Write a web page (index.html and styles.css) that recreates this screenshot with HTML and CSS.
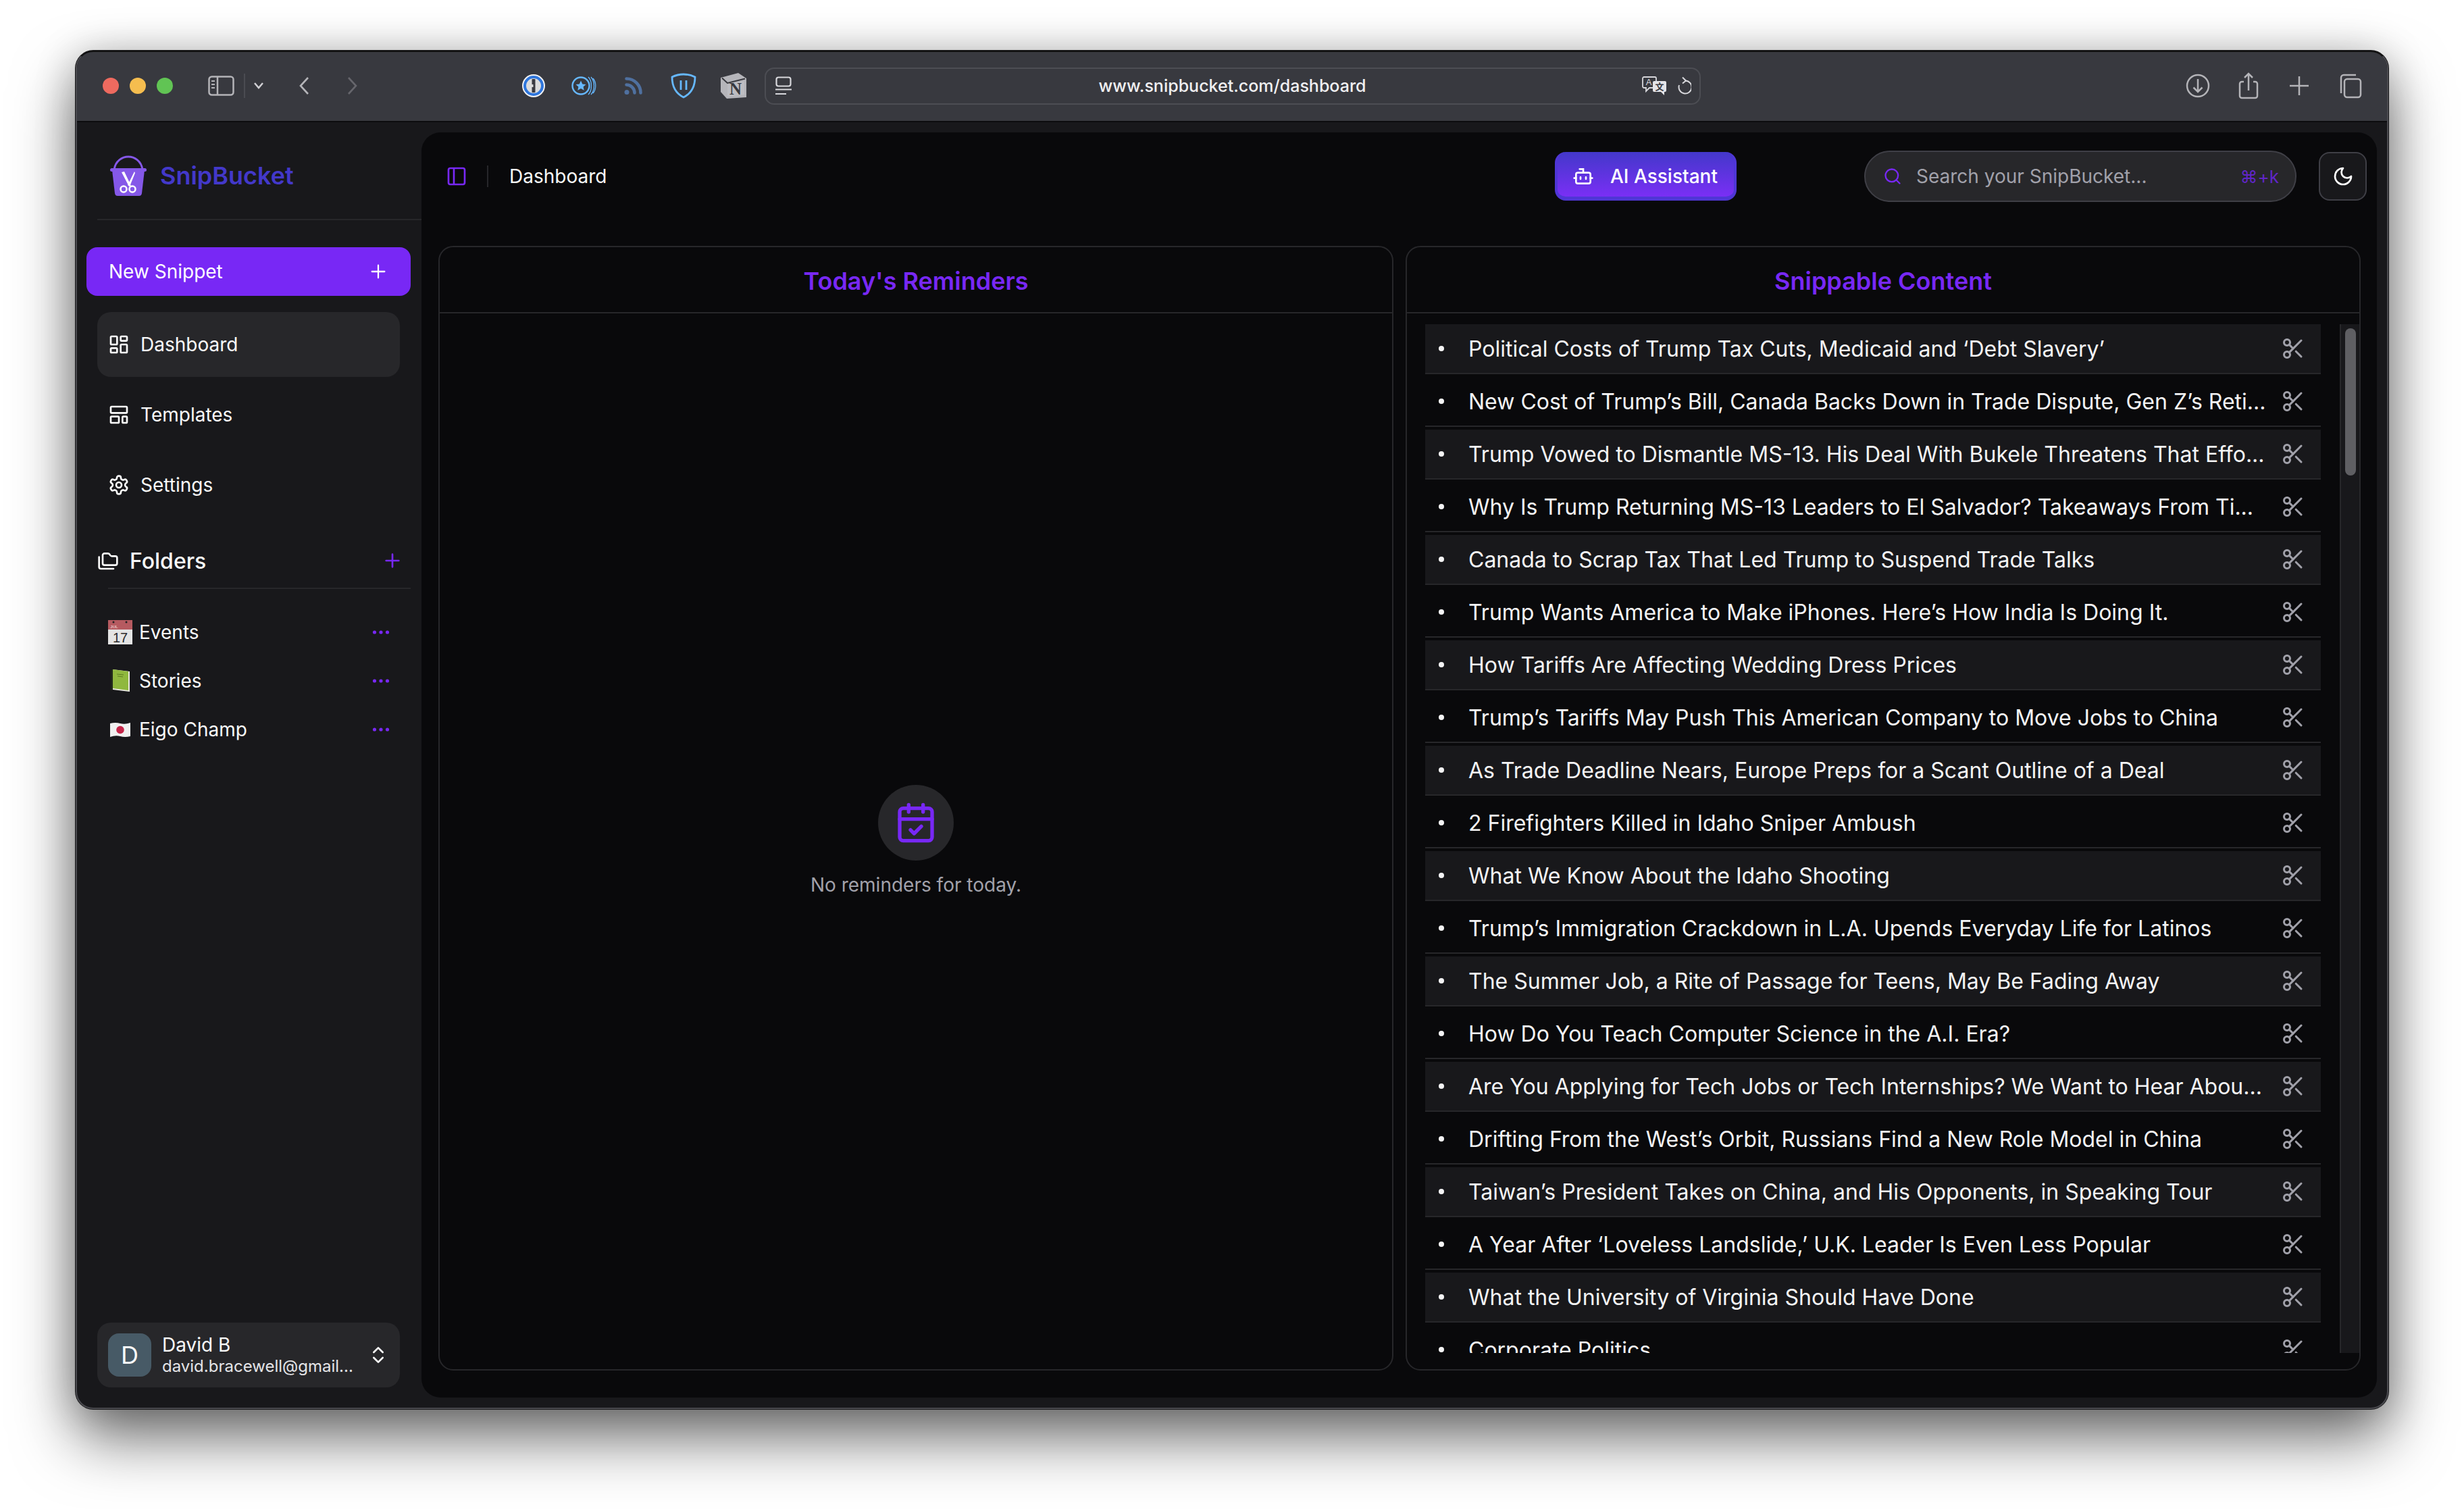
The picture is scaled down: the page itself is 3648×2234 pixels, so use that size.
FILE: index.html
```html
<!DOCTYPE html>
<html>
<head>
    <title>SnipBucket - Dashboard</title>
    <link rel="stylesheet" href="styles.css">
</head>
<body>
    <div class="window">
        <!-- browser chrome -->
        <div class="titlebar">
            <span class="light red"></span>
            <span class="light yellow"></span>
            <span class="light green"></span>

            <svg class="tb-sidebar" width="39" height="30" viewBox="0 0 39 30" fill="none" stroke="#b4b4b8" stroke-width="2.5">
                <rect x="1.5" y="1.5" width="36" height="27" rx="4"/>
                <path d="M14 1.5v27"/>
                <path d="M5 8h5M5 13h5M5 18h5" stroke-width="2"/>
            </svg>
            <span class="tb-divider"></span>
            <svg class="tb-caret" width="16" height="12" viewBox="0 0 16 12" fill="none" stroke="#d0d0d4" stroke-width="2.5"><path d="M2 2l6 7 6-7"/></svg>
            <svg class="tb-back" width="16" height="28" viewBox="0 0 16 28" fill="none" stroke="#b4b4b8" stroke-width="2.6"><path d="M14 2L3 14l11 12"/></svg>
            <svg class="tb-forward" width="16" height="28" viewBox="0 0 16 28" fill="none" stroke="#66666c" stroke-width="2.6"><path d="M2 2l11 12L2 26"/></svg>

            <div class="extensions">
                <svg width="40" height="40" viewBox="0 0 40 40">
                    <circle cx="20" cy="20" r="17" fill="#f2f2f2"/>
                    <circle cx="20" cy="20" r="13" fill="#dcdcdc" stroke="#2f76dc" stroke-width="4"/>
                    <rect x="17.500" y="10" width="5" height="20" rx="1" fill="#3a3a40"/>
                    <rect x="16.500" y="18" width="3" height="4" fill="#dcdcdc"/>
                </svg>
                <svg width="40" height="40" viewBox="0 0 40 40" fill="none" stroke="#66b8ff" stroke-width="2.4">
                    <circle cx="16" cy="20" r="12.500"/>
                    <path d="M16 12.500l2.300 4.900 5.200.6-3.900 3.600 1.100 5.200-4.700-2.700-4.700 2.700 1.100-5.200-3.900-3.600 5.200-.6z" fill="#66b8ff" stroke="none"/>
                    <path d="M27 7c6 6 6 20 0 26M31 7c6 7 6 19 0 26M34 9c5 6 5 16 0 22" stroke-width="1.300"/>
                </svg>
                <svg width="40" height="40" viewBox="0 0 40 40" fill="none" stroke="#4f709f" stroke-width="4.600" stroke-linecap="round">
                    <path d="M9.500 18.500a12 12 0 0 1 12 12"/>
                    <path d="M9.500 9.500a21 21 0 0 1 21 21"/>
                    <circle cx="10" cy="29.500" r="3.500" fill="#4f709f" stroke="none"/>
                </svg>
                <svg width="40" height="40" viewBox="0 0 40 40" fill="none" stroke="#66b8ff" stroke-width="2.8">
                    <path d="M20 3c6 0 12 1.500 17 4 0 13-5 24-17 30C8 31 3 20 3 7c5-2.500 11-4 17-4z"/>
                    <path d="M16 12v14M24 12v14"/>
                </svg>
                <svg width="40" height="40" viewBox="0 0 40 40">
                    <path d="M1 8L27 1l12 8v28L10 39 1 29z" fill="#b5b5ba"/>
                    <path d="M3 8.500l8 7.500 26-6.500" fill="none" stroke="#38393f" stroke-width="2"/>
                    <path d="M11 18l25-5v20l-25 3z" fill="#bdbdc2"/>
                    <text class="notion-n" x="23" y="33" text-anchor="middle">N</text>
                </svg>
            </div>

            <div class="address">
                <svg width="24" height="28" viewBox="0 0 24 28" fill="none" stroke="#d8d8dc" stroke-width="2.200">
                    <rect x="1.500" y="1.500" width="21" height="13" rx="3"/>
                    <path d="M0 19.500h24M0 26h16"/>
                </svg>
                <span class="url">www.snipbucket.com/dashboard</span>
                <svg class="translate" width="37" height="28" viewBox="0 0 37 28">
                    <path d="M3 1h16a2 2 0 0 1 2 2v12a2 2 0 0 1-2 2H11l-5 5v-5H3a2 2 0 0 1-2-2V3a2 2 0 0 1 2-2z" fill="#38393f" stroke="#d8d8dc" stroke-width="1.800"/>
                    <text class="tr-a" x="10" y="13" text-anchor="middle">A</text>
                    <path d="M18 7h16a2 2 0 0 1 2 2v12a2 2 0 0 1-2 2h-1v5l-5-5H18a2 2 0 0 1-2-2V9a2 2 0 0 1 2-2z" fill="#e4e4e8"/>
                    <text class="tr-b" x="26" y="20" text-anchor="middle">文</text>
                </svg>
                <svg class="reload" width="22" height="28" viewBox="0 0 22 28" fill="none" stroke="#d8d8dc" stroke-width="2">
                    <path d="M13 6.500A9.500 9.500 0 1 1 4 13"/>
                    <path d="M9 1.500l5 5-5 4"/>
                </svg>
            </div>

            <div class="tb-actions">
                <svg width="40" height="40" viewBox="0 0 40 40" fill="none" stroke="#b4b4b8" stroke-width="2.500">
                    <circle cx="20" cy="20" r="16"/>
                    <path d="M20 10v19M13.500 22.500l6.500 6.500 6.500-6.500"/>
                </svg>
                <svg width="40" height="40" viewBox="0 0 40 40" fill="none" stroke="#b4b4b8" stroke-width="2.500">
                    <path d="M13 14h-3a3 3 0 0 0-3 3v18a3 3 0 0 0 3 3h20a3 3 0 0 0 3-3V17a3 3 0 0 0-3-3h-3"/>
                    <path d="M20 27V2M14 8l6-6 6 6"/>
                </svg>
                <svg width="40" height="40" viewBox="0 0 40 40" fill="none" stroke="#b4b4b8" stroke-width="2.500">
                    <path d="M20 6v28M6 20h28"/>
                </svg>
                <svg width="40" height="40" viewBox="0 0 40 40" fill="none" stroke="#b4b4b8" stroke-width="2.500">
                    <path d="M7 31V8a4 4 0 0 1 4-4h18"/>
                    <rect x="12" y="10" width="24" height="27" rx="4"/>
                </svg>
            </div>
        </div>

        <div class="app">
            <aside class="sidebar">
                <div class="brand">
                    <svg width="54" height="60" viewBox="0 0 54 60">
                        <path d="M6 21C8 8 18 2 27 2s19 6 21 19" fill="none" stroke="#8558e8" stroke-width="3"/>
                        <rect x="0" y="19" width="54" height="5" rx="2.500" fill="#8558e8"/>
                        <path d="M3 22h48l-4 34q-.5 4-4 4H11q-3.500 0-4-4z" fill="#8558e8"/>
                        <path d="M17 25l4-1 10 21-3 1zM36 24l1 2-8 20-3-2z" fill="#fff"/>
                        <circle cx="20" cy="50" r="4.500" fill="none" stroke="#fff" stroke-width="2.600"/>
                        <circle cx="33" cy="50" r="4.500" fill="none" stroke="#fff" stroke-width="2.600"/>
                    </svg>
                    <span class="brand-name">SnipBucket</span>
                </div>

                <button class="new-snippet">
                    <span>New Snippet</span>
                    <svg width="32" height="32" viewBox="0 0 24 24" fill="none" stroke="#fff" stroke-width="1.700" stroke-linecap="round"><path d="M5 12h14M12 5v14"/></svg>
                </button>

                <nav class="nav">
                    <a class="nav-item active">
                        <svg class="icon" viewBox="0 0 24 24"><rect x="3" y="3" width="7" height="9" rx="1"/><rect x="14" y="3" width="7" height="5" rx="1"/><rect x="14" y="12" width="7" height="9" rx="1"/><rect x="3" y="16" width="7" height="5" rx="1"/></svg>
                        Dashboard
                    </a>
                    <a class="nav-item">
                        <svg class="icon" viewBox="0 0 24 24"><rect x="3" y="3" width="18" height="7" rx="1"/><rect x="3" y="14" width="9" height="7" rx="1"/><rect x="16" y="14" width="5" height="7" rx="1"/></svg>
                        Templates
                    </a>
                    <a class="nav-item">
                        <svg class="icon" viewBox="0 0 24 24"><path d="M12.220 2h-.44a2 2 0 0 0-2 2v.18a2 2 0 0 1-1 1.730l-.43.25a2 2 0 0 1-2 0l-.15-.08a2 2 0 0 0-2.730.73l-.22.38a2 2 0 0 0 .73 2.730l.15.1a2 2 0 0 1 1 1.720v.51a2 2 0 0 1-1 1.740l-.15.09a2 2 0 0 0-.73 2.730l.22.38a2 2 0 0 0 2.730.73l.15-.08a2 2 0 0 1 2 0l.43.25a2 2 0 0 1 1 1.730V20a2 2 0 0 0 2 2h.44a2 2 0 0 0 2-2v-.18a2 2 0 0 1 1-1.730l.43-.25a2 2 0 0 1 2 0l.15.08a2 2 0 0 0 2.730-.73l.22-.39a2 2 0 0 0-.73-2.730l-.15-.08a2 2 0 0 1-1-1.740v-.5a2 2 0 0 1 1-1.740l.15-.09a2 2 0 0 0 .73-2.730l-.22-.38a2 2 0 0 0-2.730-.73l-.15.08a2 2 0 0 1-2 0l-.43-.25a2 2 0 0 1-1-1.730V4a2 2 0 0 0-2-2z"/><circle cx="12" cy="12" r="3"/></svg>
                        Settings
                    </a>
                </nav>

                <div class="folders-head">
                    <svg class="icon" viewBox="0 0 24 24"><path d="M20 17a2 2 0 0 0 2-2V9a2 2 0 0 0-2-2h-3.900a2 2 0 0 1-1.690-.9l-.81-1.200a2 2 0 0 0-1.670-.9H8a2 2 0 0 0-2 2v9a2 2 0 0 0 2 2Z"/><path d="M2 8v11a2 2 0 0 0 2 2h14"/></svg>
                    <span class="folders-title">Folders</span>
                    <svg class="folders-add" width="32" height="32" viewBox="0 0 24 24" fill="none" stroke="#7828f5" stroke-width="2" stroke-linecap="round"><path d="M5 12h14M12 5v14"/></svg>
                </div>
                <div class="folders-rule"></div>

                <div class="folders">
                    <div class="folder">
                        <svg class="emoji" viewBox="0 0 36 36">
                            <rect x="0" y="0" width="36" height="36" fill="#e4e4e4"/>
                            <rect x="0" y="0" width="36" height="14" fill="#b65a60"/>
                            <circle cx="8" cy="3" r="1.500" fill="#222"/><circle cx="27" cy="3" r="1.500" fill="#222"/>
                            <text class="emoji-month" x="9" y="12" text-anchor="middle">JUL</text>
                            <text class="emoji-day" x="18" y="33" text-anchor="middle">17</text>
                        </svg>
                        <span class="folder-name">Events</span>
                        <svg class="dots" width="28" height="6" viewBox="0 0 28 6" fill="#7828f5"><circle cx="4.500" cy="3" r="2.600"/><circle cx="14" cy="3" r="2.600"/><circle cx="23.500" cy="3" r="2.600"/></svg>
                    </div>
                    <div class="folder">
                        <svg class="emoji" viewBox="0 0 36 36">
                            <path d="M4 2l3-1v30l-3 1z" fill="#20281a"/>
                            <path d="M7 1l25 3v30L7 31z" fill="#e8e8e0"/>
                            <path d="M7 1l23 3v28L7 29z" fill="#8fb83e"/>
                            <path d="M13 8l10 1M14 11l8 1" stroke="#5d7c22" stroke-width="1"/>
                        </svg>
                        <span class="folder-name">Stories</span>
                        <svg class="dots" width="28" height="6" viewBox="0 0 28 6" fill="#7828f5"><circle cx="4.500" cy="3" r="2.600"/><circle cx="14" cy="3" r="2.600"/><circle cx="23.500" cy="3" r="2.600"/></svg>
                    </div>
                    <div class="folder">
                        <svg class="emoji" viewBox="0 0 36 36">
                            <path d="M3 9q8-2 15 0t15-1v20q-8 2-15 0t-15 1z" fill="#f0f0f0"/>
                            <circle cx="18" cy="18.500" r="5.800" fill="#c5264a"/>
                        </svg>
                        <span class="folder-name">Eigo Champ</span>
                        <svg class="dots" width="28" height="6" viewBox="0 0 28 6" fill="#7828f5"><circle cx="4.500" cy="3" r="2.600"/><circle cx="14" cy="3" r="2.600"/><circle cx="23.500" cy="3" r="2.600"/></svg>
                    </div>
                </div>

                <div class="user">
                    <span class="avatar">D</span>
                    <div class="user-text">
                        <span class="user-name">David B</span>
                        <span class="user-mail">david.bracewell@gmail...</span>
                    </div>
                    <svg class="icon user-caret" viewBox="0 0 24 24"><path d="m7 15 5 5 5-5"/><path d="m7 9 5-5 5 5"/></svg>
                </div>
            </aside>

            <main class="panel">
                <header class="topbar">
                    <svg class="toggle" width="32" height="32" viewBox="0 0 24 24" fill="none" stroke="#7828f5" stroke-width="2"><rect x="3" y="3" width="18" height="18" rx="2"/><path d="M9 3v18"/></svg>
                    <span class="topbar-divider"></span>
                    <span class="crumb">Dashboard</span>

                    <button class="ai-button">
                        <svg width="32" height="32" viewBox="0 0 24 24" fill="none" stroke="#fff" stroke-width="2" stroke-linecap="round"><path d="M12 8V4H8"/><rect x="4" y="8" width="16" height="12" rx="2"/><path d="M2 14h2M20 14h2M15 13v2M9 13v2"/></svg>
                        AI Assistant
                    </button>

                    <div class="search">
                        <svg width="28" height="28" viewBox="0 0 24 24" fill="none" stroke="#7828f5" stroke-width="2" stroke-linecap="round"><circle cx="11" cy="11" r="8"/><path d="m21 21-4.300-4.300"/></svg>
                        <span class="search-text">Search your SnipBucket...</span>
                        <span class="kbd">⌘+k</span>
                    </div>

                    <button class="theme">
                        <svg width="32" height="32" viewBox="0 0 24 24" fill="none" stroke="#fff" stroke-width="2" stroke-linecap="round" stroke-linejoin="round"><path d="M12 3a6 6 0 0 0 9 9 9 9 0 1 1-9-9Z"/></svg>
                    </button>
                </header>

                <div class="cards">
                    <section class="card">
                        <h2 class="card-title">Today's Reminders</h2>
                        <div class="empty">
                            <span class="empty-badge">
                                <svg width="64" height="64" viewBox="0 0 24 24" fill="none" stroke="#7828f5" stroke-width="2" stroke-linecap="round" stroke-linejoin="round"><path d="M8 2v4M16 2v4"/><rect x="3" y="4" width="18" height="18" rx="2"/><path d="M3 10h18"/><path d="m9 16 2 2 4-4"/></svg>
                            </span>
                            <p class="empty-text">No reminders for today.</p>
                        </div>
                    </section>

                    <section class="card">
                        <h2 class="card-title">Snippable Content</h2>
                        <div class="content">
                            <ul class="rows">
                                <li class="row"><span class="bullet"></span><span class="row-text">Political Costs of Trump Tax Cuts, Medicaid and ‘Debt Slavery’</span><svg class="scissors" viewBox="0 0 24 24"><circle cx="6" cy="6" r="3"/><path d="M8.120 8.120 12 12"/><path d="M20 4 8.120 15.880"/><circle cx="6" cy="18" r="3"/><path d="M14.800 14.800 20 20"/></svg></li>
                                <li class="row"><span class="bullet"></span><span class="row-text">New Cost of Trump’s Bill, Canada Backs Down in Trade Dispute, Gen Z’s Reti...</span><svg class="scissors" viewBox="0 0 24 24"><circle cx="6" cy="6" r="3"/><path d="M8.120 8.120 12 12"/><path d="M20 4 8.120 15.880"/><circle cx="6" cy="18" r="3"/><path d="M14.800 14.800 20 20"/></svg></li>
                                <li class="row"><span class="bullet"></span><span class="row-text">Trump Vowed to Dismantle MS-13. His Deal With Bukele Threatens That Effo...</span><svg class="scissors" viewBox="0 0 24 24"><circle cx="6" cy="6" r="3"/><path d="M8.120 8.120 12 12"/><path d="M20 4 8.120 15.880"/><circle cx="6" cy="18" r="3"/><path d="M14.800 14.800 20 20"/></svg></li>
                                <li class="row"><span class="bullet"></span><span class="row-text">Why Is Trump Returning MS-13 Leaders to El Salvador? Takeaways From Ti...</span><svg class="scissors" viewBox="0 0 24 24"><circle cx="6" cy="6" r="3"/><path d="M8.120 8.120 12 12"/><path d="M20 4 8.120 15.880"/><circle cx="6" cy="18" r="3"/><path d="M14.800 14.800 20 20"/></svg></li>
                                <li class="row"><span class="bullet"></span><span class="row-text">Canada to Scrap Tax That Led Trump to Suspend Trade Talks</span><svg class="scissors" viewBox="0 0 24 24"><circle cx="6" cy="6" r="3"/><path d="M8.120 8.120 12 12"/><path d="M20 4 8.120 15.880"/><circle cx="6" cy="18" r="3"/><path d="M14.800 14.800 20 20"/></svg></li>
                                <li class="row"><span class="bullet"></span><span class="row-text">Trump Wants America to Make iPhones. Here’s How India Is Doing It.</span><svg class="scissors" viewBox="0 0 24 24"><circle cx="6" cy="6" r="3"/><path d="M8.120 8.120 12 12"/><path d="M20 4 8.120 15.880"/><circle cx="6" cy="18" r="3"/><path d="M14.800 14.800 20 20"/></svg></li>
                                <li class="row"><span class="bullet"></span><span class="row-text">How Tariffs Are Affecting Wedding Dress Prices</span><svg class="scissors" viewBox="0 0 24 24"><circle cx="6" cy="6" r="3"/><path d="M8.120 8.120 12 12"/><path d="M20 4 8.120 15.880"/><circle cx="6" cy="18" r="3"/><path d="M14.800 14.800 20 20"/></svg></li>
                                <li class="row"><span class="bullet"></span><span class="row-text">Trump’s Tariffs May Push This American Company to Move Jobs to China</span><svg class="scissors" viewBox="0 0 24 24"><circle cx="6" cy="6" r="3"/><path d="M8.120 8.120 12 12"/><path d="M20 4 8.120 15.880"/><circle cx="6" cy="18" r="3"/><path d="M14.800 14.800 20 20"/></svg></li>
                                <li class="row"><span class="bullet"></span><span class="row-text">As Trade Deadline Nears, Europe Preps for a Scant Outline of a Deal</span><svg class="scissors" viewBox="0 0 24 24"><circle cx="6" cy="6" r="3"/><path d="M8.120 8.120 12 12"/><path d="M20 4 8.120 15.880"/><circle cx="6" cy="18" r="3"/><path d="M14.800 14.800 20 20"/></svg></li>
                                <li class="row"><span class="bullet"></span><span class="row-text">2 Firefighters Killed in Idaho Sniper Ambush</span><svg class="scissors" viewBox="0 0 24 24"><circle cx="6" cy="6" r="3"/><path d="M8.120 8.120 12 12"/><path d="M20 4 8.120 15.880"/><circle cx="6" cy="18" r="3"/><path d="M14.800 14.800 20 20"/></svg></li>
                                <li class="row"><span class="bullet"></span><span class="row-text">What We Know About the Idaho Shooting</span><svg class="scissors" viewBox="0 0 24 24"><circle cx="6" cy="6" r="3"/><path d="M8.120 8.120 12 12"/><path d="M20 4 8.120 15.880"/><circle cx="6" cy="18" r="3"/><path d="M14.800 14.800 20 20"/></svg></li>
                                <li class="row"><span class="bullet"></span><span class="row-text">Trump’s Immigration Crackdown in L.A. Upends Everyday Life for Latinos</span><svg class="scissors" viewBox="0 0 24 24"><circle cx="6" cy="6" r="3"/><path d="M8.120 8.120 12 12"/><path d="M20 4 8.120 15.880"/><circle cx="6" cy="18" r="3"/><path d="M14.800 14.800 20 20"/></svg></li>
                                <li class="row"><span class="bullet"></span><span class="row-text">The Summer Job, a Rite of Passage for Teens, May Be Fading Away</span><svg class="scissors" viewBox="0 0 24 24"><circle cx="6" cy="6" r="3"/><path d="M8.120 8.120 12 12"/><path d="M20 4 8.120 15.880"/><circle cx="6" cy="18" r="3"/><path d="M14.800 14.800 20 20"/></svg></li>
                                <li class="row"><span class="bullet"></span><span class="row-text">How Do You Teach Computer Science in the A.I. Era?</span><svg class="scissors" viewBox="0 0 24 24"><circle cx="6" cy="6" r="3"/><path d="M8.120 8.120 12 12"/><path d="M20 4 8.120 15.880"/><circle cx="6" cy="18" r="3"/><path d="M14.800 14.800 20 20"/></svg></li>
                                <li class="row"><span class="bullet"></span><span class="row-text">Are You Applying for Tech Jobs or Tech Internships? We Want to Hear Abou...</span><svg class="scissors" viewBox="0 0 24 24"><circle cx="6" cy="6" r="3"/><path d="M8.120 8.120 12 12"/><path d="M20 4 8.120 15.880"/><circle cx="6" cy="18" r="3"/><path d="M14.800 14.800 20 20"/></svg></li>
                                <li class="row"><span class="bullet"></span><span class="row-text">Drifting From the West’s Orbit, Russians Find a New Role Model in China</span><svg class="scissors" viewBox="0 0 24 24"><circle cx="6" cy="6" r="3"/><path d="M8.120 8.120 12 12"/><path d="M20 4 8.120 15.880"/><circle cx="6" cy="18" r="3"/><path d="M14.800 14.800 20 20"/></svg></li>
                                <li class="row"><span class="bullet"></span><span class="row-text">Taiwan’s President Takes on China, and His Opponents, in Speaking Tour</span><svg class="scissors" viewBox="0 0 24 24"><circle cx="6" cy="6" r="3"/><path d="M8.120 8.120 12 12"/><path d="M20 4 8.120 15.880"/><circle cx="6" cy="18" r="3"/><path d="M14.800 14.800 20 20"/></svg></li>
                                <li class="row"><span class="bullet"></span><span class="row-text">A Year After ‘Loveless Landslide,’ U.K. Leader Is Even Less Popular</span><svg class="scissors" viewBox="0 0 24 24"><circle cx="6" cy="6" r="3"/><path d="M8.120 8.120 12 12"/><path d="M20 4 8.120 15.880"/><circle cx="6" cy="18" r="3"/><path d="M14.800 14.800 20 20"/></svg></li>
                                <li class="row"><span class="bullet"></span><span class="row-text">What the University of Virginia Should Have Done</span><svg class="scissors" viewBox="0 0 24 24"><circle cx="6" cy="6" r="3"/><path d="M8.120 8.120 12 12"/><path d="M20 4 8.120 15.880"/><circle cx="6" cy="18" r="3"/><path d="M14.800 14.800 20 20"/></svg></li>
                                <li class="row"><span class="bullet"></span><span class="row-text">Corporate Politics</span><svg class="scissors" viewBox="0 0 24 24"><circle cx="6" cy="6" r="3"/><path d="M8.120 8.120 12 12"/><path d="M20 4 8.120 15.880"/><circle cx="6" cy="18" r="3"/><path d="M14.800 14.800 20 20"/></svg></li>
                            </ul>
                            <div class="scrollbar"><span class="thumb"></span></div>
                        </div>
                    </section>
                </div>
            </main>
        </div>
    </div>
</body>
</html>
```

FILE: styles.css
```css
* {
    box-sizing: border-box;
}

html,
body {
    height: 100%;
    margin: 0;
    overflow: hidden;
}

body {
    background: #fff;
    font-family: Inter, "Noto Sans", sans-serif;
    color: #fafafa;
    padding: 75px 0 0 112px;
}

/* Window */
.window {
    width: 3424px;
    height: 2011px;
    display: flex;
    flex-direction: column;
    border: 2px solid #4a4a4f;
    border-top-color: #111;
    border-radius: 26px;
    background: #18181b;
    box-shadow: 0 0 0 1px #1a1a1c, 0 44px 90px rgba(0, 0, 0, 0.55), 0 4px 60px rgba(0, 0, 0, 0.22);
    overflow: hidden;
}

/* Browser chrome */
.titlebar {
    flex: none;
    height: 104px;
    display: flex;
    align-items: center;
    padding-left: 38px;
    padding-bottom: 2px;
    background: #38393f;
    border-bottom: 2px solid #0c0c0e;
}

.light {
    width: 24px;
    height: 24px;
    border-radius: 50%;
    margin-right: 16px;
}

.red { background: #ee6a5f; }
.yellow { background: #f5bd4f; }
.green { background: #61c454; margin-right: 0; }

.tb-sidebar { margin-left: 52px; }

.tb-divider {
    width: 2px;
    height: 36px;
    margin-left: 14px;
    background: #4a4b51;
}

.tb-caret { margin-left: 12px; }
.tb-back { margin-left: 51px; }
.tb-forward { margin-left: 56px; }

.extensions {
    display: flex;
    gap: 34px;
    margin-left: 240px;
}

.notion-n {
    font-family: "Liberation Serif", serif;
    font-weight: 700;
    font-size: 25px;
    fill: #38393f;
}

.address {
    width: 1386px;
    height: 55px;
    margin-left: 26px;
    display: flex;
    align-items: center;
    padding: 0 12px 0 14px;
    border: 2px solid #4c4d53;
    border-radius: 14px;
}

.url {
    flex: 1;
    padding-left: 46px;
    text-align: center;
    font-size: 25px;
    font-weight: 500;
    color: #f0f0f2;
}

.reload { margin-left: 14px; }

.tr-a {
    font-family: "Liberation Sans", sans-serif;
    font-size: 13px;
    fill: #d8d8dc;
}

.tr-b {
    font-family: "Noto Sans CJK SC", sans-serif;
    font-size: 13px;
    font-weight: 700;
    fill: #38393f;
}

.tb-actions {
    display: flex;
    gap: 35px;
    margin-left: auto;
    padding-right: 35px;
}

/* App layout */
.app {
    flex: 1;
    min-height: 0;
    display: flex;
}

.sidebar {
    flex: none;
    width: 510px;
    display: flex;
    flex-direction: column;
}

.brand {
    height: 145px;
    margin-left: 30px;
    padding-left: 19px;
    padding-top: 15px;
    display: flex;
    align-items: center;
    gap: 20px;
    border-bottom: 2px solid #27272a;
}

.brand-name {
    font-size: 36px;
    font-weight: 600;
    color: #4338ca;
}

.new-snippet {
    flex: none;
    height: 72px;
    margin: 40px 16px 0 14px;
    padding: 0 32px 0 33px;
    display: flex;
    align-items: center;
    justify-content: space-between;
    border: none;
    border-radius: 16px;
    background: #7828f5;
    color: #fff;
    font: 400 28px Inter, sans-serif;
}

.icon {
    flex: none;
    width: 32px;
    height: 32px;
    fill: none;
    stroke: #fafafa;
    stroke-width: 2;
    stroke-linecap: round;
    stroke-linejoin: round;
}

.nav {
    margin: 24px 32px 0 30px;
    display: flex;
    flex-direction: column;
    gap: 8px;
}

.nav-item {
    height: 96px;
    padding-left: 16px;
    display: flex;
    align-items: center;
    gap: 16px;
    border-radius: 20px;
    font-size: 28px;
    font-weight: 400;
}

.nav-item.active {
    background: #27272a;
}

/* Folders */
.folders-head {
    height: 60px;
    margin: 34px 16px 0 30px;
    display: flex;
    align-items: center;
    gap: 16px;
}

.folders-title {
    font-size: 32px;
    font-weight: 500;
}

.folders-add {
    margin-left: auto;
    margin-right: 11px;
}

.folders-rule {
    height: 2px;
    margin: 10px 16px 0 46px;
    background: #27272a;
}

.folders {
    margin: 28px 32px 0 46px;
}

.folder {
    height: 72px;
    padding-right: 14px;
    display: flex;
    align-items: center;
    gap: 10px;
    font-size: 28px;
}

.emoji {
    flex: none;
    width: 36px;
    height: 36px;
}

.emoji-month {
    font-family: "Liberation Sans", sans-serif;
    font-size: 6px;
    font-weight: 700;
    fill: #e6c4c4;
}

.emoji-day {
    font-family: "Liberation Sans", sans-serif;
    font-size: 20px;
    fill: #2a2a2a;
}

.dots {
    margin-left: auto;
}

/* User card */
.user {
    margin: auto 32px 30px 30px;
    height: 96px;
    padding: 0 16px;
    display: flex;
    align-items: center;
    gap: 16px;
    border-radius: 20px;
    background: #27272a;
}

.avatar {
    flex: none;
    width: 64px;
    height: 64px;
    display: flex;
    align-items: center;
    justify-content: center;
    border-radius: 16px;
    background: #475a66;
    font-size: 36px;
}

.user-text {
    flex: 1;
    min-width: 0;
    display: flex;
    flex-direction: column;
}

.user-name {
    font-size: 28px;
    font-weight: 400;
    line-height: 34px;
}

.user-mail {
    font-size: 24px;
    line-height: 30px;
    color: #e4e4e7;
    white-space: nowrap;
}

/* Main panel */
.panel {
    flex: 1;
    min-width: 0;
    margin: 15px 15px 15px 0;
    padding-bottom: 40px;
    display: flex;
    flex-direction: column;
    border-radius: 28px;
    background: #09090b;
}

.topbar {
    flex: none;
    height: 168px;
    padding: 0 15px 38px 36px;
    display: flex;
    align-items: center;
}

.topbar-divider {
    width: 2px;
    height: 32px;
    margin-left: 29px;
    background: #27272a;
}

.crumb {
    margin-left: 31px;
    font-size: 28px;
    font-weight: 400;
}

.ai-button {
    width: 269px;
    height: 72px;
    margin-left: auto;
    padding: 5px 0 0 22px;
    display: flex;
    align-items: center;
    gap: 24px;
    border: 4px solid #4f36d6;
    border-top-width: 0;
    border-bottom-width: 6px;
    border-radius: 16px;
    background: linear-gradient(#4338ca, #7a2ff5);
    color: #fff;
    font: 500 28px Inter, sans-serif;
}

.search {
    width: 640px;
    height: 76px;
    margin-left: 189px;
    padding: 0 24px 0 26px;
    display: flex;
    align-items: center;
    gap: 21px;
    border: 2px solid #3f3f46;
    border-radius: 38px;
    background: #27272a;
}

.search-text {
    font-size: 28px;
    color: #a1a1aa;
}

.kbd {
    margin-left: auto;
    font-size: 26px;
    color: #6025c8;
}

.theme {
    width: 71px;
    height: 72px;
    margin-left: 33px;
    padding: 0;
    display: flex;
    align-items: center;
    justify-content: center;
    border: 2px solid #3f3f46;
    border-radius: 16px;
    background: #18181b;
}

/* Cards */
.cards {
    flex: 1;
    min-height: 0;
    padding: 0 24px 0 25px;
    display: grid;
    grid-template-columns: 1414px 1414px;
    gap: 18px;
}

.card {
    min-height: 0;
    display: flex;
    flex-direction: column;
    border: 2px solid #27272a;
    border-radius: 22px;
    overflow: hidden;
}

.card-title {
    flex: none;
    height: 98px;
    margin: 0;
    padding-top: 4px;
    display: flex;
    align-items: center;
    justify-content: center;
    border-bottom: 2px solid #27272a;
    font-size: 36px;
    font-weight: 600;
    color: #7828f5;
}

.empty {
    flex: 1;
    display: flex;
    flex-direction: column;
    align-items: center;
    justify-content: center;
    gap: 16px;
}

.empty-badge {
    width: 112px;
    height: 112px;
    display: flex;
    align-items: center;
    justify-content: center;
    border-radius: 50%;
    background: #27272a;
}

.empty-text {
    margin: 0;
    font-size: 28px;
    line-height: 40px;
    color: #a1a1aa;
}

/* Snippable list */
.content {
    flex: 1;
    min-height: 0;
    padding: 16px 0 24px 27px;
    display: flex;
    gap: 28px;
}

.rows {
    width: 1326px;
    margin: 0;
    padding: 0;
    list-style: none;
    display: flex;
    flex-direction: column;
    gap: 4px;
    overflow: hidden;
}

.row {
    flex: none;
    height: 74px;
    padding: 0 23px 0 20px;
    display: flex;
    align-items: center;
    border-bottom: 2px solid #27272a;
}

.row:nth-child(odd) {
    background: #18181b;
}

.bullet {
    flex: none;
    width: 8px;
    height: 8px;
    margin-right: 36px;
    border-radius: 50%;
    background: #f4f4f5;
}

.row-text {
    flex: 1;
    min-width: 0;
    font-size: 32px;
    white-space: nowrap;
    color: #f4f4f5;
}

.scissors {
    flex: none;
    width: 36px;
    height: 36px;
    fill: none;
    stroke: #a1a1aa;
    stroke-width: 2;
    stroke-linecap: round;
    stroke-linejoin: round;
}

.scrollbar {
    flex: none;
    width: 29px;
    padding: 6px 6px 0 6px;
    border-left: 2px solid #27272a;
    background: #18181b;
}

.thumb {
    display: block;
    width: 16px;
    height: 218px;
    border-radius: 8px;
    background: #5f5f63;
}
```
